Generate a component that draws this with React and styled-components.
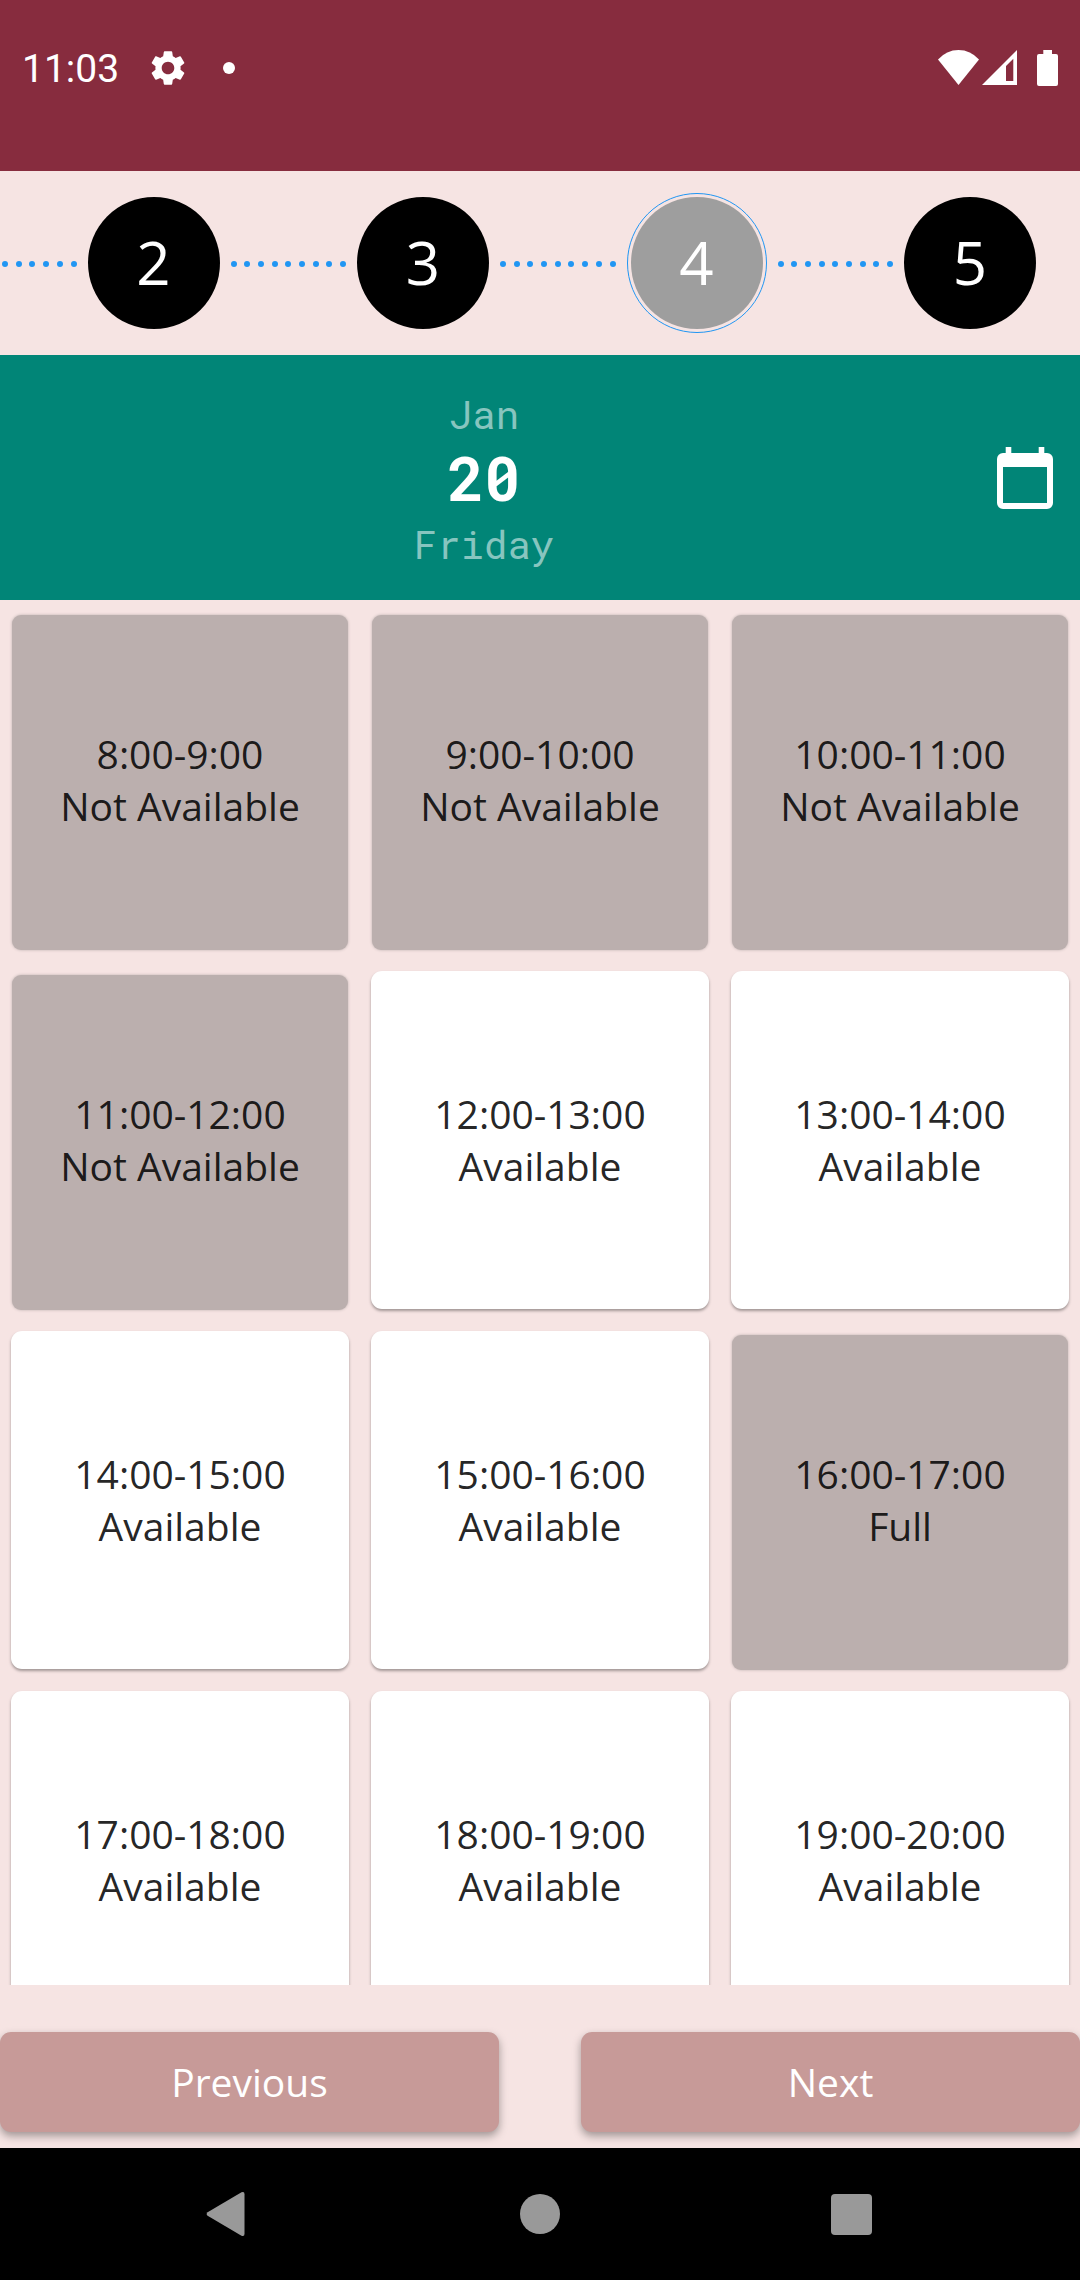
import React, { useState } from "react";
import styled, { createGlobalStyle, css } from "styled-components";
import { MdSettings } from "react-icons/md";

const GlobalStyle = createGlobalStyle`
  *, *::before, *::after { box-sizing: border-box; }
  html, body, #root { height: 100%; }
  body { margin: 0; background: #f6e4e3; }
  button { font: inherit; border: 0; padding: 0; margin: 0; cursor: pointer; }
  svg { display: block; flex: none; }
`;

const Screen = styled.div`
  display: flex;
  flex-direction: column;
  height: 100vh;
  overflow: hidden;
  background: #f6e4e3;
  color: rgba(0, 0, 0, 0.87);
  font-family: "Open Sans", "Noto Sans", sans-serif;
  font-size: 39px;
  line-height: 52px;
`;

const StatusBar = styled.header`
  flex: none;
  height: 171px;
  background: #872c3e;
`;

const StatusRow = styled.div`
  display: flex;
  align-items: center;
  justify-content: space-between;
  height: 135px;
  padding: 0 22px;
  color: #fff;
`;

const StatusGroup = styled.div`
  display: flex;
  align-items: center;
  gap: ${(p) => p.$gap}px;
`;

const Clock = styled.time`
  padding-top: 2px;
  font-family: Roboto, sans-serif;
  font-size: 39px;
  line-height: 52px;
`;

const NotificationDot = styled.span`
  width: 12px;
  height: 12px;
  border-radius: 50%;
  background: #fff;
`;

const Stepper = styled.nav`
  flex: none;
  height: 184px;
  overflow: hidden;
`;

/* The strip is scrolled a little to the left, so its first line is cut. */
const StepTrack = styled.div`
  display: flex;
  align-items: center;
  gap: 11px;
  height: 100%;
  margin-left: -39px;
  padding-right: 44px;
`;

const StepButton = styled.button`
  flex: none;
  width: 132px;
  height: 132px;
  padding-bottom: 3px;
  border-radius: 50%;
  background: ${(p) => (p.$active ? "#9e9e9e" : "#000")};
  color: #fff;
  font-size: 60px;
  line-height: 80px;
`;

const StepRing = styled.span`
  flex: none;
  padding: 3px;
  border: 1px solid #2196f3;
  border-radius: 50%;
  line-height: 0;
`;

const DottedLine = styled.span`
  flex: 1;
  display: flex;
  justify-content: space-between;
  padding-top: 2px;
`;

const Dot = styled.span`
  width: 6px;
  height: 6px;
  border-radius: 50%;
  background: #2196f3;
`;

const DateBar = styled.section`
  flex: none;
  display: flex;
  align-items: stretch;
  height: 245px;
  background: #018577;
`;

const DateText = styled.div`
  flex: 1;
  display: flex;
  flex-direction: column;
  align-items: center;
  justify-content: center;
  padding-top: 2px;
  font-family: "Roboto Mono", "Liberation Mono", monospace;
  color: rgba(255, 255, 255, 0.54);
`;

const Day = styled.strong`
  padding-bottom: 2px;
  color: #fff;
  font-size: 61px;
  line-height: 76px;
`;

const CalendarButton = styled.button`
  display: flex;
  align-items: center;
  justify-content: center;
  width: 112px;
  padding-left: 2px;
  background: transparent;
  color: #fff;
`;

const SlotArea = styled.main`
  flex: 1;
  min-height: 0;
  overflow: hidden;
`;

const SlotGrid = styled.div`
  display: grid;
  grid-template-columns: repeat(3, 1fr);
  gap: 22px;
  padding: 11px;
`;

const SlotCard = styled.button`
  position: relative;
  z-index: 0;
  display: flex;
  flex-direction: column;
  align-items: center;
  justify-content: center;
  aspect-ratio: 1;
  border-radius: 11px;
  color: rgba(0, 0, 0, 0.87);
  ${(p) =>
    p.disabled
      ? css`
          background: transparent;
          cursor: default;
          &::before {
            content: "";
            position: absolute;
            z-index: -1;
            inset: 4px 1px -1px;
            border-radius: 9px;
            background: #bbafae;
            box-shadow: 0 0 3px #bbafae;
          }
        `
      : css`
          background: #fff;
          box-shadow: 0 2px 3px rgba(0, 0, 0, 0.35);
        `}
`;

const Footer = styled.footer`
  flex: none;
  display: flex;
  gap: 82px;
  padding: 47px 0 16px;
`;

const FooterButton = styled.button`
  flex: 1;
  height: 100px;
  border-radius: 11px;
  background: #c79a98;
  color: #fff;
  box-shadow: 0 4px 8px rgba(0, 0, 0, 0.35);
`;

const SystemNav = styled.nav`
  flex: none;
  display: flex;
  justify-content: center;
  height: 132px;
  background: #000;
`;

const SystemButton = styled.button`
  display: flex;
  align-items: center;
  justify-content: center;
  width: 311px;
  background: transparent;
  color: #999;
`;

const slots = [
  ["8:00-9:00", "Not Available"],
  ["9:00-10:00", "Not Available"],
  ["10:00-11:00", "Not Available"],
  ["11:00-12:00", "Not Available"],
  ["12:00-13:00", "Available"],
  ["13:00-14:00", "Available"],
  ["14:00-15:00", "Available"],
  ["15:00-16:00", "Available"],
  ["16:00-17:00", "Full"],
  ["17:00-18:00", "Available"],
  ["18:00-19:00", "Available"],
  ["19:00-20:00", "Available"],
];

const WifiIcon = () => (
  <svg width="41" height="35" viewBox="0 0 41 35" fill="currentColor" aria-hidden="true">
    <path d="M20.5 35 0 9.5Q8.5 0 20.5 0T41 9.5Z" />
  </svg>
);

const SignalIcon = () => (
  <svg width="35" height="35" viewBox="0 0 35 35" fill="currentColor" aria-hidden="true">
    <path fillRule="evenodd" d="M0 35 35 0V35ZM24 16V31H31.3V8.7Z" />
  </svg>
);

const BatteryIcon = () => (
  <svg width="21" height="36" viewBox="0 0 21 36" fill="currentColor" aria-hidden="true">
    <path d="M6.3 0H15V4H19a2 2 0 0 1 2 2V34a2 2 0 0 1-2 2H2a2 2 0 0 1-2-2V6a2 2 0 0 1 2-2H6.3Z" />
  </svg>
);

const CalendarIcon = () => (
  <svg width="56" height="62" viewBox="0 0 56 62" fill="currentColor" aria-hidden="true">
    <path
      fillRule="evenodd"
      d="M8.7 0h5.6v6h27.4V0h5.6v6H50a6 6 0 0 1 6 6V56a6 6 0 0 1-6 6H6a6 6 0 0 1-6-6V12a6 6 0 0 1 6-6h2.7ZM6 20V56H50V20Z"
    />
  </svg>
);

function Connector() {
  return (
    <DottedLine aria-hidden="true">
      {Array.from({ length: 9 }, (_, i) => (
        <Dot key={i} />
      ))}
    </DottedLine>
  );
}

function Step({ number, active, onSelect }) {
  const button = (
    <StepButton
      type="button"
      $active={active}
      aria-current={active ? "step" : undefined}
      onClick={() => onSelect(number)}
    >
      {number}
    </StepButton>
  );
  return active ? <StepRing>{button}</StepRing> : button;
}

export default function App() {
  const [step, setStep] = useState(4);

  return (
    <Screen>
      <GlobalStyle />
      <StatusBar>
        <StatusRow>
          <StatusGroup $gap={34}>
            <StatusGroup $gap={28}>
              <Clock>11:03</Clock>
              <MdSettings size={42} aria-hidden="true" />
            </StatusGroup>
            <NotificationDot />
          </StatusGroup>
          <StatusGroup $gap={20}>
            <StatusGroup $gap={3}>
              <WifiIcon />
              <SignalIcon />
            </StatusGroup>
            <BatteryIcon />
          </StatusGroup>
        </StatusRow>
      </StatusBar>

      <Stepper>
        <StepTrack>
          {[2, 3, 4, 5].map((n) => (
            <React.Fragment key={n}>
              <Connector />
              <Step number={n} active={n === step} onSelect={setStep} />
            </React.Fragment>
          ))}
        </StepTrack>
      </Stepper>

      <DateBar>
        <DateText>
          <span>Jan</span>
          <Day>20</Day>
          <span>Friday</span>
        </DateText>
        <CalendarButton type="button" aria-haspopup="dialog">
          <CalendarIcon />
        </CalendarButton>
      </DateBar>

      <SlotArea>
        <SlotGrid>
          {slots.map(([time, state]) => (
            <SlotCard key={time} type="button" disabled={state !== "Available"}>
              <span>{time}</span>
              <span>{state}</span>
            </SlotCard>
          ))}
        </SlotGrid>
      </SlotArea>

      <Footer>
        <FooterButton type="button" onClick={() => setStep(Math.max(2, step - 1))}>
          Previous
        </FooterButton>
        <FooterButton type="button" onClick={() => setStep(Math.min(5, step + 1))}>
          Next
        </FooterButton>
      </Footer>

      <SystemNav>
        <SystemButton type="button">
          <svg width="48" height="48" viewBox="0 0 48 48" fill="currentColor" aria-hidden="true">
            <path d="M2.6 22.2 36.5 2.3Q39.5 1 39.5 4.3V43.7Q39.5 47 36.5 45.7L2.6 25.8Q.6 24 2.6 22.2Z" />
          </svg>
        </SystemButton>
        <SystemButton type="button">
          <svg width="40" height="40" viewBox="0 0 40 40" fill="currentColor" aria-hidden="true">
            <circle cx="20" cy="20" r="20" />
          </svg>
        </SystemButton>
        <SystemButton type="button">
          <svg width="41" height="41" viewBox="0 0 41 41" fill="currentColor" aria-hidden="true">
            <rect width="41" height="41" rx="4" />
          </svg>
        </SystemButton>
      </SystemNav>
    </Screen>
  );
}
